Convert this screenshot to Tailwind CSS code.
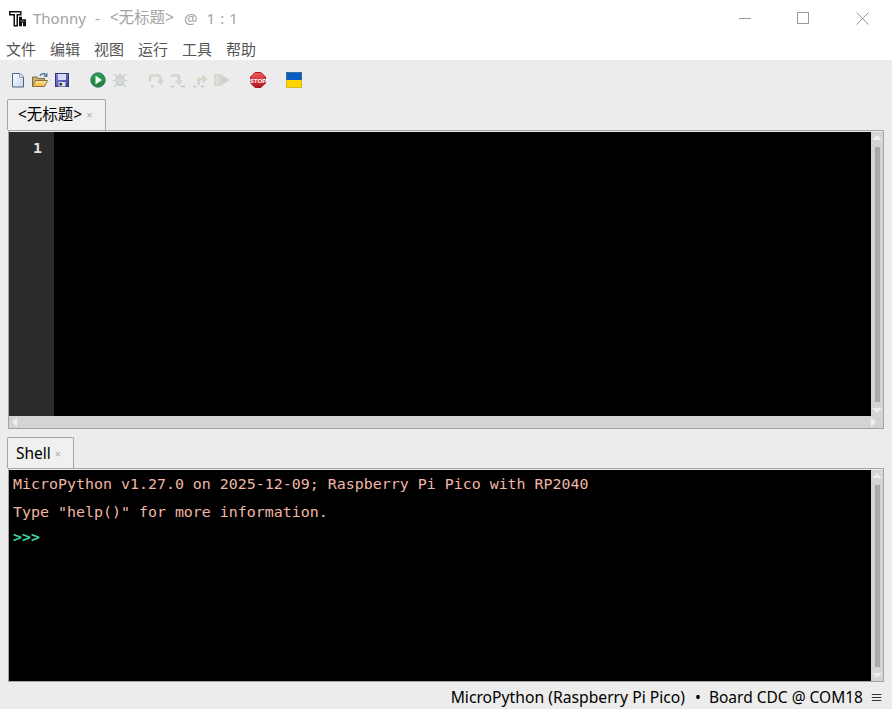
<!DOCTYPE html>
<html lang="zh">
<head>
<meta charset="UTF-8">
<title>Thonny</title>
<script src="https://cdn.jsdelivr.net/npm/@tailwindcss/browser@4"></script>
</head>
<body class="w-[892px] h-[709px] overflow-hidden flex flex-col bg-[#ececec] font-['Noto_Sans','Noto_Sans_CJK_SC',sans-serif]">

<!-- title bar -->
<div class="h-[36px] bg-white flex items-center text-[15px] text-[#a3a3a3] shrink-0">
  <svg class="ml-[9px] mr-[7px]" width="17" height="17" viewBox="0 0 17 17" fill="none" stroke="#111" stroke-width="1.500">
    <path d="M0.750 1.750h11v3h-3.500v11h-3v-11h-4.500z" fill="#fff"/>
    <path d="M10.750 7.500v8h1.500v-3.500h2.500v3.500h1.500v-5.500h-4v-2.500z" fill="#fff"/>
  </svg>
  <span>Thonny</span>
  <span class="ml-[9px]">-</span>
  <span class="ml-[10px] text-[15.5px]">&lt;无标题&gt;</span>
  <span class="ml-[10px]">@</span>
  <span class="ml-[9px] tracking-[0.6px]">1 : 1</span>
  <div class="ml-auto flex items-center">
    <div class="w-[12px] h-px bg-[#999] mr-[46px]"></div>
    <div class="w-[12px] h-[12px] border border-[#999] mr-[47px]"></div>
    <svg class="mr-[23px]" width="13" height="13" viewBox="0 0 13 13" stroke="#999" fill="none"><path d="M0.500 0.500l12 12M12.500 0.500l-12 12"/></svg>
  </div>
</div>

<!-- menu -->
<div class="h-[24px] bg-white flex items-center text-[15px] text-[#555] shrink-0 pt-[2px]">
  <span class="w-[44px] pl-[6px]">文件</span>
  <span class="w-[44px] pl-[6px]">编辑</span>
  <span class="w-[44px] pl-[6px]">视图</span>
  <span class="w-[44px] pl-[6px]">运行</span>
  <span class="w-[44px] pl-[6px]">工具</span>
  <span class="w-[44px] pl-[6px]">帮助</span>
</div>

<!-- toolbar -->
<div class="h-[39px] flex items-center gap-[6px] pl-[10px] shrink-0">
  <svg width="16" height="16" viewBox="0 0 16 16">
    <defs>
      <linearGradient id="page" x1="0" y1="0" x2="1" y2="1"><stop offset="0" stop-color="#ffffff"/><stop offset="1" stop-color="#c4d4ea"/></linearGradient>
      <linearGradient id="folder" x1="0" y1="0" x2="0" y2="1"><stop offset="0" stop-color="#ffe79a"/><stop offset="1" stop-color="#f3b23c"/></linearGradient>
      <linearGradient id="disk" x1="0" y1="0" x2="1" y2="1"><stop offset="0" stop-color="#7f86dc"/><stop offset="1" stop-color="#3d3f9e"/></linearGradient>
      <linearGradient id="play" x1="0" y1="0" x2="0" y2="1"><stop offset="0" stop-color="#2aa05a"/><stop offset="1" stop-color="#1f7f3c"/></linearGradient>
      <linearGradient id="stop" x1="0" y1="0" x2="0" y2="1"><stop offset="0" stop-color="#ee5a5a"/><stop offset="1" stop-color="#b5141c"/></linearGradient>
    </defs>
    <path d="M2.500 1.500h7.500l3.500 3.500v10h-11z" fill="url(#page)" stroke="#4a6488"/>
    <path d="M9.500 1.500v4h4" fill="#d8e2f0" stroke="#8ea4c0"/>
  </svg>
  <svg width="16" height="16" viewBox="0 0 16 16"><path d="M0.500 14.500v-9.500h5l1 1.500h6v2" fill="#c9ae6e" stroke="#7a6a48"/><path d="M0.500 14.500l3-6h12l-3 6z" fill="url(#folder)" stroke="#8a7444"/><path d="M8 4c1-2.500 3.500-3 5.500-1.500" fill="none" stroke="#5a7ca4" stroke-width="1.600"/><path d="M15.500 .5v4.500h-4.500z" fill="#5a7ca4"/></svg>
  <svg width="16" height="16" viewBox="0 0 16 16"><rect x="1.500" y="1.500" width="13" height="13" fill="url(#disk)" stroke="#34367e"/><rect x="4" y="2" width="8" height="6" fill="#d7daf4"/><rect x="4.500" y="10" width="7" height="4.500" fill="#dedee8"/><rect x="5.500" y="11" width="2.500" height="2.500" fill="#333"/></svg>
  <svg class="ml-[14px]" width="16" height="16" viewBox="0 0 16 16"><circle cx="8" cy="8" r="7.200" fill="url(#play)" stroke="#1b6e50" stroke-width="0.900"/><path d="M5.500 3.500l6.500 4.500-6.500 4.500z" fill="#eef9ee"/></svg>
  <svg width="16" height="16" viewBox="0 0 16 16" stroke="#c6cdc6" stroke-width="1.200" fill="none"><path d="M2 2l3 3M14 2l-3 3M.5 8.500h3M12.500 8.500h3M2 15l3-3M14 15l-3-3M8 1v3"/><ellipse cx="8" cy="8.500" rx="4" ry="5" fill="#d2d8d2"/></svg>
  <svg class="ml-[14px]" width="16" height="16" viewBox="0 0 16 16" fill="none" stroke="#d8d4ca" stroke-width="2.600"><path d="M2 9.500v-3c0-2 1-3 2.500-3h5c2 0 3 1 3 3v3"/><path d="M8.500 8.500h8l-4 4.500z" fill="#d8d4ca" stroke="none"/><path d="M3 14.500h3" stroke="#c4c4c4" stroke-width="1.500"/></svg>
  <svg width="16" height="16" viewBox="0 0 16 16" fill="none" stroke="#d8d4ca" stroke-width="2.600"><path d="M1 3.500h6.500c1 0 1.500 .5 1.500 1.500v4"/><path d="M5 8.500h8l-4 4.500z" fill="#d8d4ca" stroke="none"/><path d="M1 14.500h3M11 14.500h4" stroke="#c4c4c4" stroke-width="1.500"/></svg>
  <svg width="16" height="16" viewBox="0 0 16 16" fill="none" stroke="#d8d4ca" stroke-width="2.600"><path d="M6.500 13v-4c0-1.200 .5-2 1.500-2h3"/><path d="M10.500 2.500v9l5-4.500z" fill="#d8d4ca" stroke="none"/><path d="M1 14.500h3M9 14.500h3" stroke="#c4c4c4" stroke-width="1.500"/></svg>
  <svg width="16" height="16" viewBox="0 0 16 16"><rect x="1" y="2.500" width="4.500" height="11" fill="#e0ddd2" stroke="#d2cdbf"/><path d="M6.500 2l9 6-9 6z" fill="#c8d4cb"/></svg>
  <svg class="ml-[14px]" width="16" height="16" viewBox="0 0 16 16"><path d="M5 .5h6l4.500 4.500v6l-4.500 4.500h-6l-4.500-4.500v-6z" fill="url(#stop)" stroke="#a51e22"/><text x="8" y="10.500" text-anchor="middle" font-size="6.200" font-weight="700" fill="#fff" font-family="Liberation Sans">STOP</text></svg>
  <svg class="ml-[14px]" width="16" height="16" viewBox="0 0 16 16"><rect x="0" y="0" width="16" height="8" fill="#0a5bc4"/><rect x="0" y="8" width="16" height="8" fill="#ffd500"/><rect x=".5" y=".5" width="15" height="15" fill="none" stroke="#8a8a6a" stroke-opacity=".4"/></svg>
</div>

<!-- editor tab -->
<div class="h-[31px] shrink-0 flex">
  <div class="ml-[7px] w-[99px] bg-[#f0f0f0] border border-b-0 border-[#a8a49c] rounded-t-[2px] flex items-center pl-[10px] text-[15.5px] text-black">
    &lt;无标题&gt;<span class="ml-[4px] text-[11px] text-[#aaa]">×</span>
  </div>
</div>

<!-- editor -->
<div class="h-[299px] shrink-0 ml-[8px] mr-[8px] border border-[#a8a49c] pt-px flex flex-col">
  <div class="flex h-[284px]">
    <div class="w-[45px] bg-[#2b2b2b] font-['DejaVu_Sans_Mono',monospace] font-bold text-[14.95px] text-[#dfe6ee] text-right pr-[12px] pt-[6px] leading-[20px]">1</div>
    <div class="flex-1 bg-black"></div>
    <div class="w-[12px] bg-[#d4d4d4] flex flex-col items-center">
      <svg class="mt-[3px] mb-[7px]" width="10" height="5" viewBox="0 0 10 5"><path d="M5 0l5 5h-10z" fill="#eee"/></svg>
      <div class="w-[5px] flex-1 bg-[#a8a8a8]"></div>
      <svg class="mt-[6px] mb-[3px]" width="10" height="5" viewBox="0 0 10 5"><path d="M0 0h10l-5 5z" fill="#eee"/></svg>
    </div>
  </div>
  <div class="h-[12px] bg-[#d4d4d4] flex items-center justify-between px-[3px]">
    <svg width="5" height="10" viewBox="0 0 5 10"><path d="M0 5l5-5v10z" fill="#eee"/></svg>
    <svg class="mr-[4px]" width="5" height="10" viewBox="0 0 5 10"><path d="M0 0l5 5-5 5z" fill="#eee"/></svg>
  </div>
</div>

<!-- shell tab -->
<div class="h-[31px] mt-[8px] shrink-0 flex">
  <div class="ml-[7px] w-[67px] bg-[#f0f0f0] border border-b-0 border-[#a8a49c] rounded-t-[2px] flex items-center pl-[8px] pt-[2px] text-[15.5px] text-black">
    Shell<span class="ml-[4px] text-[11px] text-[#aaa]">×</span>
  </div>
</div>

<!-- shell -->
<div class="h-[214px] shrink-0 ml-[8px] mr-[8px] border border-[#a8a49c] pt-px flex">
  <div class="flex-1 bg-black pl-[4px] pt-[4px] font-['DejaVu_Sans_Mono',monospace] text-[14.95px] text-[#f0b6a6]">
    <div class="h-[28px] leading-[20px]">MicroPython v1.27.0 on 2025-12-09; Raspberry Pi Pico with RP2040</div>
    <div class="h-[25px] leading-[20px]">Type "help()" for more information.</div>
    <div class="leading-[20px] font-bold text-[#3fd9a6]">&gt;&gt;&gt;</div>
  </div>
  <div class="w-[12px] bg-[#d4d4d4] flex flex-col items-center">
    <svg class="mt-[3px] mb-[7px]" width="10" height="5" viewBox="0 0 10 5"><path d="M5 0l5 5h-10z" fill="#eee"/></svg>
    <div class="w-[5px] flex-1 bg-[#a8a8a8]"></div>
    <svg class="mt-[6px] mb-[3px]" width="10" height="5" viewBox="0 0 10 5"><path d="M0 0h10l-5 5z" fill="#eee"/></svg>
  </div>
</div>

<!-- status bar -->
<div class="h-[26px] mt-px shrink-0 flex items-center justify-end pt-[3px] text-[15.5px] text-black pr-[9px]">
  <span class="text-[15.7px]">MicroPython (Raspberry Pi Pico)</span>
  <span class="ml-[10px]">•</span>
  <span class="ml-[8px]">Board CDC @ COM18</span>
  <span class="ml-[7px] text-[13px]">≡</span>
</div>

</body>
</html>
